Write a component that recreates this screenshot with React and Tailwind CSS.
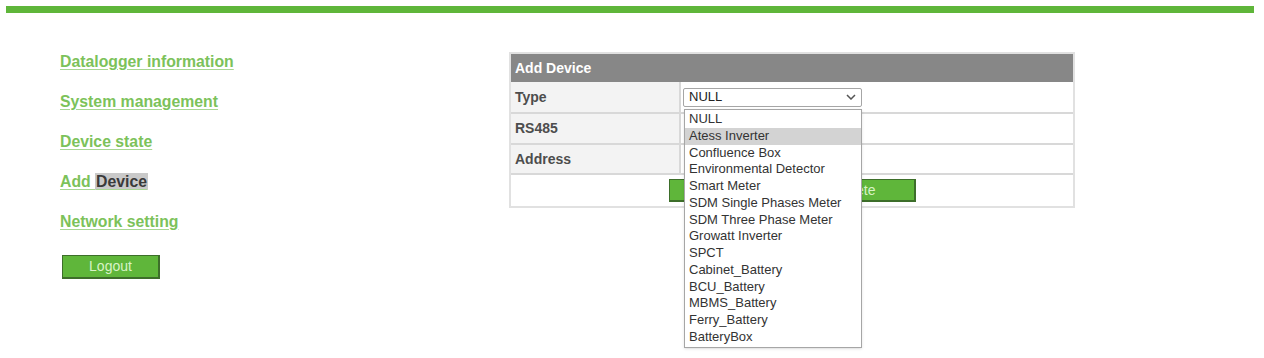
import React from "react";

const items = [
  "NULL",
  "Atess Inverter",
  "Confluence Box",
  "Environmental Detector",
  "Smart Meter",
  "SDM Single Phases Meter",
  "SDM Three Phase Meter",
  "Growatt Inverter",
  "SPCT",
  "Cabinet_Battery",
  "BCU_Battery",
  "MBMS_Battery",
  "Ferry_Battery",
  "BatteryBox",
];

function NavLink({ children }) {
  return (
    <a className="block h-5 leading-5 text-[15.8px] font-bold text-[#7cc25a] underline decoration-[#a8d692] underline-offset-2">
      {children}
    </a>
  );
}

export default function App() {
  return (
    <div
      className="w-[1264px] h-[358px] bg-white overflow-hidden"
      style={{ fontFamily: '"Liberation Sans", Arial, sans-serif' }}
    >
      <div className="pt-[6px] px-[6px] pr-[10px]">
        <div className="h-[7px] bg-[#5fb63a]" />
      </div>
      <div className="flex items-start pt-[39px] pl-[60px]">
        <nav className="w-[449px] flex flex-col gap-5">
          <NavLink>Datalogger information</NavLink>
          <NavLink>System management</NavLink>
          <NavLink>Device state</NavLink>
          <a className="block h-5 leading-5 text-[15.8px] font-bold text-[#7cc25a] underline decoration-[#a8d692] underline-offset-2">
            Add <span className="bg-[#c9c9c9] text-[#3a3a3a] px-[1px]">Device</span>
          </a>
          <NavLink>Network setting</NavLink>
          <div className="pt-[2px] pl-[2px]">
            <button className="w-[98px] h-[24px] bg-[#5fb63a] border border-[#3d6e2a] border-b-2 border-r-2 text-[14px] text-[#d8f3c6] leading-none">
              Logout
            </button>
          </div>
        </nav>
        <div className="w-[566px] border-2 border-[#e1e1e1] text-[14px]">
          <div className="h-[28px] bg-[#878787] flex items-center pl-[4px] font-bold text-white">
            Add Device
          </div>
          <div className="flex h-[32px] border-b-2 border-[#d8d8d8]">
            <div className="w-[170px] bg-[#f3f3f3] border-r-2 border-[#d8d8d8] flex items-center pl-[4px] font-bold text-[#4d4d4d]">
              Type
            </div>
            <div className="relative flex items-center pl-[2px]">
              <div className="w-[179px] h-[19px] border border-[#a6a6a6] rounded-[2px] bg-white flex items-center justify-between pl-[5px] pr-[5px] text-[13px] text-[#222]">
                <span>NULL</span>
                <svg width="10" height="6" viewBox="0 0 10 6">
                  <path d="M1 1l4 4 4-4" fill="none" stroke="#555" strokeWidth="1.5" />
                </svg>
              </div>
              <div className="absolute left-[3px] top-[27px] z-10 w-[178px] border border-[#a6a6a6] bg-white shadow-sm py-[1px]">
                {items.map((t, i) => (
                  <div
                    key={t}
                    className={
                      "h-[16.75px] leading-[16.75px] pl-[4px] text-[13px] text-[#333] " +
                      (i === 1 ? "bg-[#d3d3d3]" : "")
                    }
                  >
                    {t}
                  </div>
                ))}
              </div>
            </div>
          </div>
          <div className="flex h-[31px] border-b-2 border-[#d8d8d8]">
            <div className="w-[170px] bg-[#f3f3f3] border-r-2 border-[#d8d8d8] flex items-center pl-[4px] font-bold text-[#4d4d4d]">
              RS485
            </div>
            <div className="flex-1" />
          </div>
          <div className="flex h-[30px] border-b-2 border-[#d8d8d8]">
            <div className="w-[170px] bg-[#f3f3f3] border-r-2 border-[#d8d8d8] flex items-center pl-[4px] font-bold text-[#4d4d4d]">
              Address
            </div>
            <div className="flex-1" />
          </div>
          <div className="h-[31px] flex items-center justify-center">
            <button className="w-[247px] h-[23px] bg-[#5fb63a] border border-[#3d6e2a] border-b-2 border-r-2 flex items-center justify-end pr-[38px] text-[14px] text-[#d8f3c6]">
              Complete
            </button>
          </div>
        </div>
      </div>
    </div>
  );
}
